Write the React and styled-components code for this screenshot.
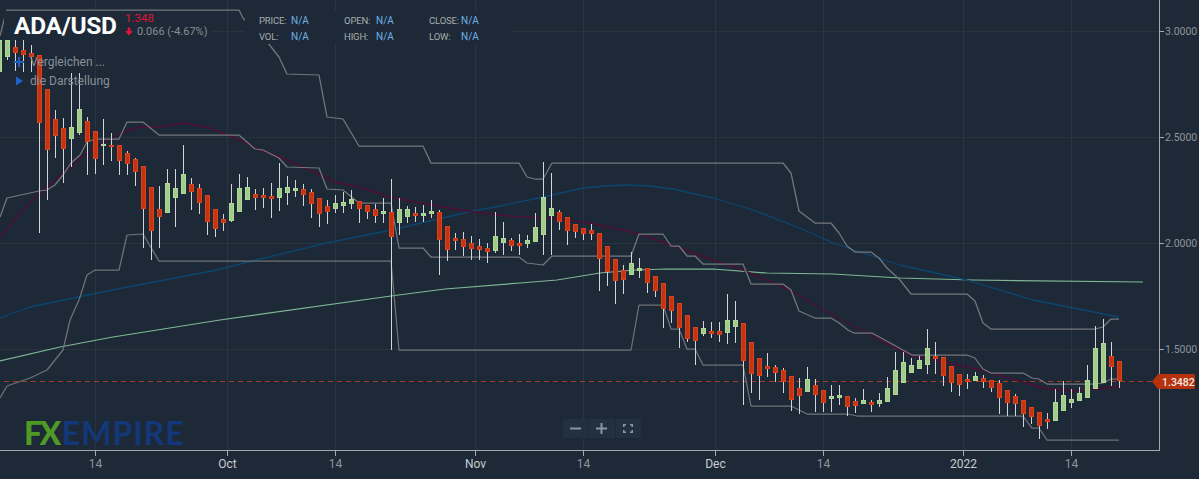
import React from "react";
import styled, { createGlobalStyle } from "styled-components";

const Global = createGlobalStyle`
  html, body { margin: 0; padding: 0; background: #1d2936; }
  body { font-family: Roboto, "Liberation Sans", sans-serif; }
`;

const RED = 0, GRN = 1;
// [bodyTop, bodyBottom, wickHigh, wickLow, direction]; one every 8px from x = -0.5
const CANDLES = [
  [40,72,38,72,GRN],[40,57,38,60,GRN],[47,53,40,71,RED],[50,55,40,72,RED],[53,57,45,72,RED],[55,123,55,233,RED],[89,150,89,200,RED],
  [119,136,110,158,RED],[128,149,118,183,RED],[127,139,73,167,GRN],[109,133,73,135,GRN],[121,142,117,175,RED],[131,159,131,174,RED],
  [144,146,119,165,GRN],[145,147,133,161,RED],[145,161,145,175,RED],[153,164,151,175,RED],[159,172,158,186,RED],[166,209,166,248,RED],
  [187,231,187,260,RED],[209,217,186,248,RED],[183,213,169,213,GRN],[188,198,169,227,GRN],[174,194,145,194,GRN],[184,192,178,210,RED],
  [188,203,184,214,RED],[195,222,195,235,RED],[209,229,209,237,RED],[219,223,214,231,RED],[203,221,184,222,GRN],[188,212,174,212,GRN],
  [187,200,177,200,GRN],[194,198,189,210,RED],[195,198,188,208,RED],[196,199,183,218,RED],[188,198,163,211,GRN],[187,193,176,205,GRN],
  [188,191,180,197,GRN],[189,195,184,206,RED],[192,204,189,218,RED],[198,214,198,227,RED],[206,212,200,224,RED],[203,209,195,213,GRN],
  [202,206,192,213,GRN],[199,204,190,209,GRN],[201,209,201,223,RED],[205,212,205,219,RED],[209,216,204,223,RED],[211,214,198,223,GRN],
  [212,237,179,350,RED],[209,223,198,235,GRN],[209,217,206,223,GRN],[213,216,207,222,RED],[213,216,205,222,GRN],[211,214,200,218,GRN],
  [212,240,210,275,RED],[226,250,226,261,RED],[238,241,233,250,RED],[239,247,232,256,RED],[243,249,236,260,RED],[246,250,239,260,RED],
  [248,252,243,263,RED],[236,251,212,253,GRN],[238,243,222,255,GRN],[240,246,238,251,RED],[243,246,234,255,RED],[240,244,235,248,GRN],
  [227,242,213,242,GRN],[197,235,162,255,GRN],[208,216,173,255,GRN],[212,222,210,230,RED],[217,231,217,245,RED],[224,232,224,238,RED],
  [228,234,228,240,RED],[230,234,224,240,RED],[233,259,233,291,RED],[246,272,246,286,RED],[259,281,259,304,RED],[270,280,265,294,RED],
  [263,275,252,275,GRN],[268,271,258,278,GRN],[268,283,268,293,RED],[276,291,276,297,RED],[283,309,283,328,RED],[296,311,296,323,RED],
  [303,328,303,348,RED],[315,339,315,342,RED],[327,341,327,365,RED],[328,334,321,336,GRN],[331,334,322,338,RED],[331,335,322,342,RED],
  [320,333,294,344,GRN],[320,327,301,343,GRN],[323,361,323,405,RED],[342,374,342,393,RED],[358,376,358,400,RED],[366,369,353,377,RED],
  [367,373,365,382,RED],[370,382,368,393,RED],[376,400,376,411,RED],[388,396,378,414,RED],[379,392,367,392,GRN],[385,395,379,412,RED],
  [390,403,390,412,RED],[396,399,385,412,GRN],[395,398,385,405,GRN],[396,407,396,416,RED],[401,406,398,413,RED],[400,404,389,404,GRN],
  [402,405,400,412,RED],[400,404,393,407,GRN],[388,402,377,402,GRN],[370,395,352,395,GRN],[362,383,352,383,GRN],[365,373,358,373,GRN],
  [360,369,356,369,GRN],[348,365,329,374,GRN],[356,359,342,374,RED],[357,376,357,386,RED],[366,383,366,392,RED],[374,385,374,396,RED],
  [379,382,374,389,RED],[376,381,372,381,GRN],[378,382,375,388,RED],[380,388,380,392,RED],[383,398,380,414,RED],[390,403,390,416,RED],
  [396,404,394,416,RED],[400,414,400,427,RED],[407,417,407,424,RED],[412,426,412,439,RED],[419,422,413,429,RED],[402,421,389,421,GRN],
  [395,411,381,411,GRN],[399,403,389,408,GRN],[393,401,387,401,GRN],[380,398,365,398,GRN],[348,389,326,389,GRN],[343,383,319,383,GRN],
  [356,367,342,386,RED],[361,381,361,388,RED],
];

const UPPER = "0,36 4,20 7,10 239,10 243,18 268,43 279,57 287,74 319,75 327,117 343,119 359,146 423,146 431,163 519,163 527,177 535,179 543,179 552,163 783,163 791,173 799,211 815,223 831,223 839,233 847,246 855,252 871,252 879,258 887,268 900,280 911,294 967,294 975,301 983,323 991,329 1095,329 1103,327 1111,319 1119,319";
const MIDDLE = "0,217 7,198 39,191 47,190 55,185 63,175 71,163 80,155 87,142 95,139 119,139 127,122 143,122 159,135 239,135 255,149 263,150 279,158 287,167 319,168 327,189 343,190 359,203 391,203 399,248 423,248 431,257 519,257 527,263 543,265 552,256 631,256 639,234 663,234 671,246 679,246 687,256 695,256 703,264 743,264 751,284 783,284 791,290 799,311 815,318 831,318 839,323 848,330 854,333 872,333 912,355 967,355 975,358 983,369 991,373 1023,373 1032,378 1039,379 1047,384 1095,384 1103,383 1111,379 1119,379";
const LOWER = "0,398 7,386 30,378 47,370 63,350 70,320 79,300 87,275 95,270 119,270 127,235 143,234 159,261 391,261 399,350 631,350 639,305 663,305 671,329 679,329 687,349 695,349 703,365 743,365 751,406 791,406 807,414 848,414 857,416 1023,416 1032,428 1039,428 1047,440 1119,440";
const PURPLE = "0,237 20,213 40,193 63,173 87,153 103,143 123,132 140,127 160,127 183,123 207,127 227,135 240,140 260,150 280,157 303,167 335,182 360,187 390,197 437,206 473,212 520,217 550,218 590,223 640,234 693,253 743,270 790,290 823,310 867,333 880,340 910,355 943,362 980,370 1023,382 1043,388 1073,391 1097,389 1119,387";
const BLUE = "0,318 30,307 112,290 217,270 260,259 327,243 391,230 473,211 500,206 543,197 583,188 605,186 627,185 650,186 673,189 713,198 753,210 800,228 833,243 900,265 967,280 1033,300 1119,317";
const GREEN = "0,361 60,347 113,337 220,320 391,296 445,289 520,283 557,280 600,273 635,270 667,269 713,269 767,273 833,274 900,278 973,280 1143,282";

const GRID_X = [95, 227, 335, 475, 583, 715, 823, 963, 1071];
const GRID_Y = [31, 137, 243, 349];
const PRICES = ["3.0000", "2.5000", "2.0000", "1.5000"];
const DATES = [
  [95, "14", false], [227, "Oct", true], [335, "14", false], [475, "Nov", true], [583, "14", false],
  [715, "Dec", true], [823, "14", false], [963, "2022", true], [1071, "14", false],
];

const Page = styled.div`
  position: relative;
  width: 1199px;
  height: 479px;
  overflow: hidden;
  background: #1d2936;
`;
const Plot = styled.svg`
  position: absolute;
  inset: 0;
  z-index: 2;
  display: block;
`;
const PriceLabel = styled.text`
  font-family: Roboto, sans-serif;
  font-size: 10.5px;
  fill: #8e949a;
`;
const DateLabel = styled.text`
  font-family: Roboto, sans-serif;
  font-size: 12px;
  fill: ${p => (p.$bright ? "#c9ccd0" : "#8e949a")};
`;
const PriceTag = styled.text`
  font-family: Roboto, sans-serif;
  font-size: 10.5px;
  font-weight: 500;
  fill: #f6e8e2;
`;
const Band = styled.polyline`
  fill: none;
  stroke: ${p => p.$color};
  stroke-width: ${p => p.$width || 1.25}px;
  stroke-linejoin: round;
`;

const TitleBlock = styled.div`
  position: absolute;
  z-index: 3;
  left: 4px;
  top: 11px;
  width: 208px;
  height: 29px;
  display: flex;
  align-items: center;
  gap: 7px;
  padding-left: 10px;
  box-sizing: border-box;
  background: #1d2936;
`;
const Symbol = styled.div`
  flex: none;
  width: 104px;
  font-size: 24.5px;
  font-weight: 700;
  color: #fbfcfc;
  line-height: 26px;
  letter-spacing: -0.3px;
  white-space: nowrap;
  margin-top: 1px;
`;
const Quote = styled.div`
  flex: none;
  display: flex;
  flex-direction: column;
  gap: 0;
  margin-top: -1px;
`;
const LastPrice = styled.div`
  font-size: 11.5px;
  line-height: 13px;
  color: #e0123c;
`;
const Change = styled.div`
  display: flex;
  align-items: center;
  gap: 4px;
  font-size: 11px;
  line-height: 13px;
  white-space: nowrap;
  color: #868d95;
`;
const Stats = styled.div`
  position: absolute;
  z-index: 3;
  left: 245px;
  top: 11px;
  width: 267px;
  height: 33px;
  box-sizing: border-box;
  padding: 1px 0 0 14px;
  background: #1d2936;
  display: grid;
  grid-template-columns: repeat(3, 85px);
  grid-auto-rows: 16.5px;
  align-items: center;
`;
const Stat = styled.div`
  display: grid;
  grid-template-columns: 32px auto;
  font-size: 9.5px;
  letter-spacing: -0.15px;
  color: #a9adb1;
`;
const StatValue = styled.span`
  color: #6db1e8;
  font-size: 10px;
  letter-spacing: 0;
`;
const Legend = styled.div`
  position: absolute;
  z-index: 3;
  left: 14px;
  top: 54px;
  display: flex;
  flex-direction: column;
  gap: 3px;
`;
const LegendRow = styled.div`
  display: flex;
  align-items: center;
  gap: 6px;
  height: 16px;
  font-size: 12px;
  color: #8a9098;
`;
const Logo = styled.div`
  position: absolute;
  z-index: 1;
  left: 24px;
  top: 415px;
  display: flex;
  align-items: baseline;
  font-family: Lato, sans-serif;
  font-size: 32px;
  line-height: 36px;
`;
const LogoFx = styled.span`
  font-weight: 900;
  color: #4f9a26;
  letter-spacing: -2.5px;
`;
const LogoName = styled.span`
  font-weight: 700;
  color: #12387a;
  letter-spacing: 1px;
  margin-left: 3px;
`;
const ZoomBar = styled.div`
  position: absolute;
  z-index: 3;
  left: 563px;
  top: 419px;
  width: 78px;
  height: 19px;
  display: flex;
  background: #223140;
  border-radius: 2px;
`;
const ZoomButton = styled.div`
  flex: 1;
  display: flex;
  align-items: center;
  justify-content: center;
  & + & { border-left: 1px solid #1d2936; }
`;

const ICON = "#8c959e";

export default function App() {
  return (
    <Page>
      <Global />
      <Legend>
        <LegendRow>
          <svg width="10" height="10" viewBox="0 0 10 10"><path d="M0 5H10M5 0V10" stroke="#1e62c8" strokeWidth="2" /></svg>
          Vergleichen ...
        </LegendRow>
        <LegendRow>
          <svg width="10" height="10" viewBox="0 0 10 10"><path d="M2 0.5L9 5L2 9.5Z" fill="#1e62c8" /></svg>
          die Darstellung
        </LegendRow>
      </Legend>
      <Logo>
        <LogoFx>FX</LogoFx>
        <LogoName>EMPIRE</LogoName>
      </Logo>
      <Plot width="1199" height="479" viewBox="0 0 1199 479">
        {GRID_X.map(x => <line key={x} x1={x + 0.5} x2={x + 0.5} y1="0" y2="450" stroke="#283541" />)}
        {GRID_Y.map(y => <line key={y} x1="0" x2="1159" y1={y + 0.5} y2={y + 0.5} stroke="#283541" />)}
        <line x1="4" x2="1159" y1="381.5" y2="381.5" stroke="#a83c22" strokeDasharray="5 4" />
        <Band points={GREEN} $color="#7fb796" />
        <Band points={BLUE} $color="#0c4670" $width={1.3} />
        <Band points={PURPLE} $color="#4f0e36" $width={1.4} />
        <Band points={UPPER} $color="#74787c" />
        <Band points={MIDDLE} $color="#74787c" />
        <Band points={LOWER} $color="#6e7276" />
        {CANDLES.map(([top, bottom, hi, lo, dir], i) => {
          const x = -0.5 + 8 * i;
          return (
            <g key={i}>
              <line x1={x} x2={x} y1={hi} y2={lo} stroke="#d3d6d9" />
              <rect
                x={x - 2}
                y={top + 0.5}
                width="4"
                height={Math.max(bottom - top - 1, 1)}
                fill={dir === GRN ? "#a0cc8a" : "#c5340f"}
                stroke={dir === GRN ? "#b0d89a" : "#dc421c"}
              />
            </g>
          );
        })}
        <line x1="0" x2="1159.5" y1="450.5" y2="450.5" stroke="#a6a8aa" />
        <line x1="1159.5" x2="1159.5" y1="0" y2="451" stroke="#a6a8aa" />
        {GRID_Y.map((y, i) => (
          <g key={y}>
            <line x1="1159" x2="1164" y1={y + 0.5} y2={y + 0.5} stroke="#a6a8aa" />
            <PriceLabel x="1165" y={y + 4}>{PRICES[i]}</PriceLabel>
          </g>
        ))}
        {DATES.map(([x, label, bright]) => (
          <g key={x}>
            <line x1={x + 0.5} x2={x + 0.5} y1="450" y2="456" stroke="#a6a8aa" />
            <DateLabel x={x + 0.5} y="468" textAnchor="middle" $bright={bright}>{label}</DateLabel>
          </g>
        ))}
        <path d="M1152 381.5L1158 374H1193a2 2 0 0 1 2 2V387a2 2 0 0 1-2 2H1158Z" fill="#b5320c" />
        <PriceTag x="1162" y="385.5">1.3482</PriceTag>
      </Plot>
      <TitleBlock>
        <Symbol>ADA/USD</Symbol>
        <Quote>
          <LastPrice>1.348</LastPrice>
          <Change>
            <svg width="8" height="9" viewBox="0 0 9 9"><path d="M3 0H6V4H9L4.5 9L0 4H3Z" fill="#e0123c" /></svg>
            0.066 (-4.67%)
          </Change>
        </Quote>
      </TitleBlock>
      <Stats>
        <Stat>PRICE: <StatValue>N/A</StatValue></Stat>
        <Stat>OPEN: <StatValue>N/A</StatValue></Stat>
        <Stat>CLOSE: <StatValue>N/A</StatValue></Stat>
        <Stat>VOL: <StatValue>N/A</StatValue></Stat>
        <Stat>HIGH: <StatValue>N/A</StatValue></Stat>
        <Stat>LOW: <StatValue>N/A</StatValue></Stat>
      </Stats>
      <ZoomBar>
        <ZoomButton>
          <svg width="11" height="11" viewBox="0 0 11 11"><path d="M0 5.5H11" stroke={ICON} strokeWidth="2" /></svg>
        </ZoomButton>
        <ZoomButton>
          <svg width="11" height="11" viewBox="0 0 11 11"><path d="M0 5.5H11M5.5 0V11" stroke={ICON} strokeWidth="2" /></svg>
        </ZoomButton>
        <ZoomButton>
          <svg width="10" height="9" viewBox="0 0 10 9"><path d="M3 .75H.75V3M7 .75H9.25V3M3 8.25H.75V6M7 8.25H9.25V6" fill="none" stroke={ICON} strokeWidth="1.5" /></svg>
        </ZoomButton>
      </ZoomBar>
    </Page>
  );
}
